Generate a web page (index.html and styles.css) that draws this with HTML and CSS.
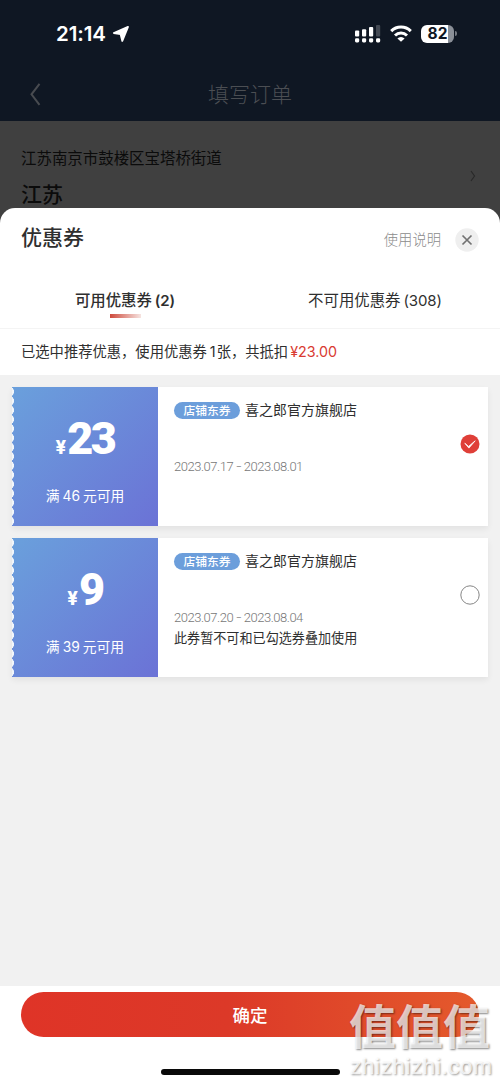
FILE: index.html
```html
<!DOCTYPE html>
<html lang="zh-CN">
<head>
<meta charset="utf-8">
<title>填写订单</title>
<link rel="stylesheet" href="styles.css">
</head>
<body>
<div class="screen">
  <header class="top">
    <div class="status">
      <span class="time">21:14</span>
      <svg class="loc" width="18" height="18" viewBox="0 0 18 18"><path d="M16 1.800 1.800 8l6.800 1.200L10.300 16z" fill="#fff" stroke="#fff" stroke-width="1.800" stroke-linejoin="round"/></svg>
      <svg class="signal" width="26" height="18" viewBox="0 0 26 18" fill="#fff"><rect x="0" y="5.500" width="4.200" height="6" rx="1"/><rect x="7" y="4.200" width="4.200" height="7.300" rx="1"/><rect x="14" y="2" width="4.200" height="9.500" rx="1"/><rect x="21" y="0" width="4.200" height="11.500" rx="1" opacity=".22"/><rect x="0" y="13.200" width="4.200" height="4.200" rx="1.300"/><rect x="7" y="13.200" width="4.200" height="4.200" rx="1.300"/><rect x="14" y="13.200" width="4.200" height="4.200" rx="1.300"/><rect x="21" y="13.200" width="4.200" height="4.200" rx="1.300"/></svg>
      <svg class="wifi" width="22" height="17" viewBox="0 0 22 17" fill="none" stroke="#fff" stroke-width="3"><path d="M1.200 6.100a14 14 0 0 1 19.600 0M5 10.500a8.700 8.700 0 0 1 12 0"/><path d="M11 16.800 7.400 13.500a5 5 0 0 1 7.200 0z" fill="#fff" stroke="none"/></svg>
      <div class="battery"><span class="level">82</span></div><i class="cap"></i>
    </div>
    <nav class="nav">
      <svg class="back" width="12" height="24" viewBox="0 0 12 24" fill="none" stroke="#484b50" stroke-width="2"><path d="M9.500 1.800 1.500 12.300l8 10.500"/></svg>
      <h1 class="page-title">填写订单</h1>
    </nav>
  </header>
  <section class="address">
    <div>
      <p class="region">江苏南京市鼓楼区宝塔桥街道</p>
      <p class="province">江苏</p>
    </div>
    <svg class="more" width="6" height="12" viewBox="0 0 6 12" fill="none" stroke="#292929" stroke-width="1.200"><path d="m1 1 3.500 5L1 11"/></svg>
  </section>
  <main class="sheet">
    <div class="head">
      <h2 class="title">优惠券</h2>
      <span class="help">使用说明</span>
      <svg class="close" width="24" height="24" viewBox="0 0 24 24"><circle cx="12" cy="12" r="11.700" fill="#efefef"/><path d="m7.500 7.500 9 9m0-9-9 9" stroke="#727272" stroke-width="1.700"/></svg>
    </div>
    <div class="tabs">
      <div class="tab active"><span>可用优惠券<b class="count">(2)</b></span><i class="bar"></i></div>
      <div class="tab"><span>不可用优惠券<span class="count">(308)</span></span></div>
    </div>
    <p class="notice">已选中推荐优惠，使用优惠券<span class="one">1</span>张，共抵扣<span class="money">¥23.00</span></p>
    <div class="list">
      <article class="coupon">
        <div class="value">
          <div class="price"><span class="yen">¥</span><span class="num">23</span></div>
          <p class="cond">满<span class="amt">46</span>元可用</p>
        </div>
        <div class="info">
          <div class="shop"><span class="tag">店铺东券</span><span class="name">喜之郎官方旗舰店</span></div>
          <p class="date">2023.07.17 <span class="dash">-</span> 2023.08.01</p>
        </div>
        <svg class="radio" width="20" height="20" viewBox="0 0 20 20"><circle cx="10" cy="10" r="9.500" fill="#df3f38"/><path d="m4.800 9.200 3.800 3.200 6.600-5.600-6.300 7.300z" fill="#fff" stroke="#fff" stroke-width=".8"/></svg>
      </article>
      <article class="coupon">
        <div class="value">
          <div class="price"><span class="yen">¥</span><span class="num">9</span></div>
          <p class="cond">满<span class="amt">39</span>元可用</p>
        </div>
        <div class="info">
          <div class="shop"><span class="tag">店铺东券</span><span class="name">喜之郎官方旗舰店</span></div>
          <p class="date">2023.07.20 <span class="dash">-</span> 2023.08.04</p>
          <p class="note">此券暂不可和已勾选券叠加使用</p>
        </div>
        <svg class="radio" width="20" height="20" viewBox="0 0 20 20"><circle cx="10" cy="10" r="9.200" fill="#fff" stroke="#777" stroke-width=".9"/></svg>
      </article>
    </div>
    <footer class="foot">
      <button class="ok">确定</button>
      <i class="home"></i>
    </footer>
  </main>
  <div class="mark"><div class="mark-cn">值值值</div><div class="mark-en">zhizhizhi.com</div></div>
</div>
</body>
</html>
```
FILE: styles.css
```css
* { box-sizing: border-box; margin: 0; padding: 0; }
body { font-family: "Noto Sans CJK SC", sans-serif; color: #2f2f2f; }
.screen { position: relative; width: 500px; height: 1084px; overflow: hidden; background: #404040; display: flex; flex-direction: column; white-space: nowrap; }
.top { height: 121px; flex: none; background: #0f1723; }
.status { height: 67px; display: flex; align-items: center; padding-left: 56px; color: #fff; }
.time { width: 52px; padding-top: 1px; font: 600 20.500px/24px Inter, sans-serif; letter-spacing: -.1px; }
.loc { margin-left: 4px; }
.signal { margin-left: 225px; }
.wifi { margin-left: 9px; }
.battery { width: 33px; height: 18px; margin-left: 9px; border-radius: 6px; overflow: hidden; background: linear-gradient(90deg, #fff 82%, #8b9098 82%); }
.level { display: block; text-align: center; color: #0f1723; font: 700 15.500px/18px Inter, sans-serif; }
.cap { width: 2px; height: 5px; margin-left: 1px; border-radius: 0 2px 2px 0; background: #757a82; }
.nav { height: 53px; padding: 0 30px; display: grid; grid-template-columns: 12px 1fr 12px; align-items: center; }
.page-title { text-align: center; font-size: 21px; line-height: 30px; font-weight: 300; color: #4b4e53; padding-bottom: 1px; }
.address { height: 87px; flex: none; padding: 24px 24px 0 21px; display: flex; justify-content: space-between; color: #0b0b0b; }
.region { font-size: 15.450px; line-height: 24px; }
.province { margin-top: 9px; font-size: 21px; line-height: 30px; font-weight: 500; }
.more { margin-top: 25px; }
.sheet { flex: 1; border-radius: 15px 15px 0 0; background: #fff; display: flex; flex-direction: column; }
.head { height: 64px; padding: 0 21px 1px 21px; display: flex; align-items: center; }
.title { flex: 1; font-size: 21px; line-height: 30px; font-weight: 500; padding-bottom: 8px; }
.help { font-size: 14.300px; font-weight: 300; color: #8c8c8c; padding-bottom: 2px; }
.close { margin-left: 14px; }
.tabs { height: 57px; border-bottom: 1px solid #f4f4f4; display: grid; grid-template-columns: 1fr 1fr; }
.tab { display: flex; flex-direction: column; align-items: center; padding-top: 15px; font-size: 15.400px; line-height: 24px; }
.active { font-weight: 500; }
.count { margin-left: 3px; font-family: Inter, sans-serif; font-size: 15px; font-weight: inherit; letter-spacing: -.1px; }
.active .count { font-weight: 600; }
.bar { width: 31px; height: 4px; margin-top: 3px; background: linear-gradient(90deg, #ce4a3c, #f6e4e1); transform: translateY(-2px); }
.notice { height: 46px; padding-left: 21px; font-size: 14.300px; line-height: 44px; }
.one { font-family: Inter, sans-serif; margin: 0 1px 0 3px; }
.money { font-family: Inter, sans-serif; color: #d93a31; margin-left: 2px; }
.list { flex: 1; padding: 12px; background: #f1f1f1; display: flex; flex-direction: column; gap: 12px; }
.coupon { height: 139px; display: flex; background: #fff; box-shadow: 0 3px 6px #00000010; }
.value { width: 146px; padding-top: 27px; color: #fff; text-align: center; background: radial-gradient(ellipse 2px 4px at 0 50%, #f1f6fb 85%, transparent 100%) 0 0 / 3px 9.250px repeat-y, linear-gradient(135deg, #6aa0dc, #6b72d6); }
.price { height: 50px; font: 900 45px/50px Roboto, sans-serif; }
.yen { font: 800 18.500px/20px Inter, sans-serif; margin-right: 1px; }
.num { letter-spacing: -2.500px; }
.cond { margin-top: 20px; font-size: 13.800px; line-height: 22px; }
.amt { font-family: Inter, sans-serif; margin: 0 3px; }
.info { flex: 1; padding: 11px 0 0 16px; }
.shop { height: 22px; display: flex; align-items: center; }
.tag { width: 66px; height: 17px; margin: 2px 5px 0 0; border-radius: 9px; background: #6c9edb; color: #fff; font-size: 11.800px; line-height: 16px; font-weight: 500; text-align: center; }
.name { font-size: 14px; line-height: 22px; }
.date { margin-top: 37px; font: 300 13px/20px Roboto, sans-serif; letter-spacing: -.48px; color: #777; }
.dash { display: inline-block; margin: 0 1px; transform: scaleX(1.400); }
.note { font-size: 13.100px; line-height: 20px; }
.radio { margin: 47px 8px 0 0; }
.foot { height: 98px; padding: 6px 21px 0; display: flex; flex-direction: column; align-items: center; }
.ok { width: 458px; height: 45px; border: 0; border-radius: 23px; background: linear-gradient(90deg, #df3427, #dc3928 45%, #e45a2c); color: #fff; font: 500 17.500px/45px "Noto Sans CJK SC", sans-serif; }
.home { width: 179px; height: 6px; margin-top: 32px; border-radius: 3px; background: #090909; }
.mark { position: absolute; left: 349px; top: 997px; width: 146px; color: #ffffffb8; text-shadow: 1px 1px 2px #00000078; }
.mark-cn { font-size: 47px; line-height: 54px; font-weight: 700; }
.mark-en { margin-top: 4px; padding-left: 1px; font: 400 22.500px/24px "Liberation Sans", sans-serif; -webkit-text-stroke: .6px #ffffffb8; letter-spacing: .55px; }
```
